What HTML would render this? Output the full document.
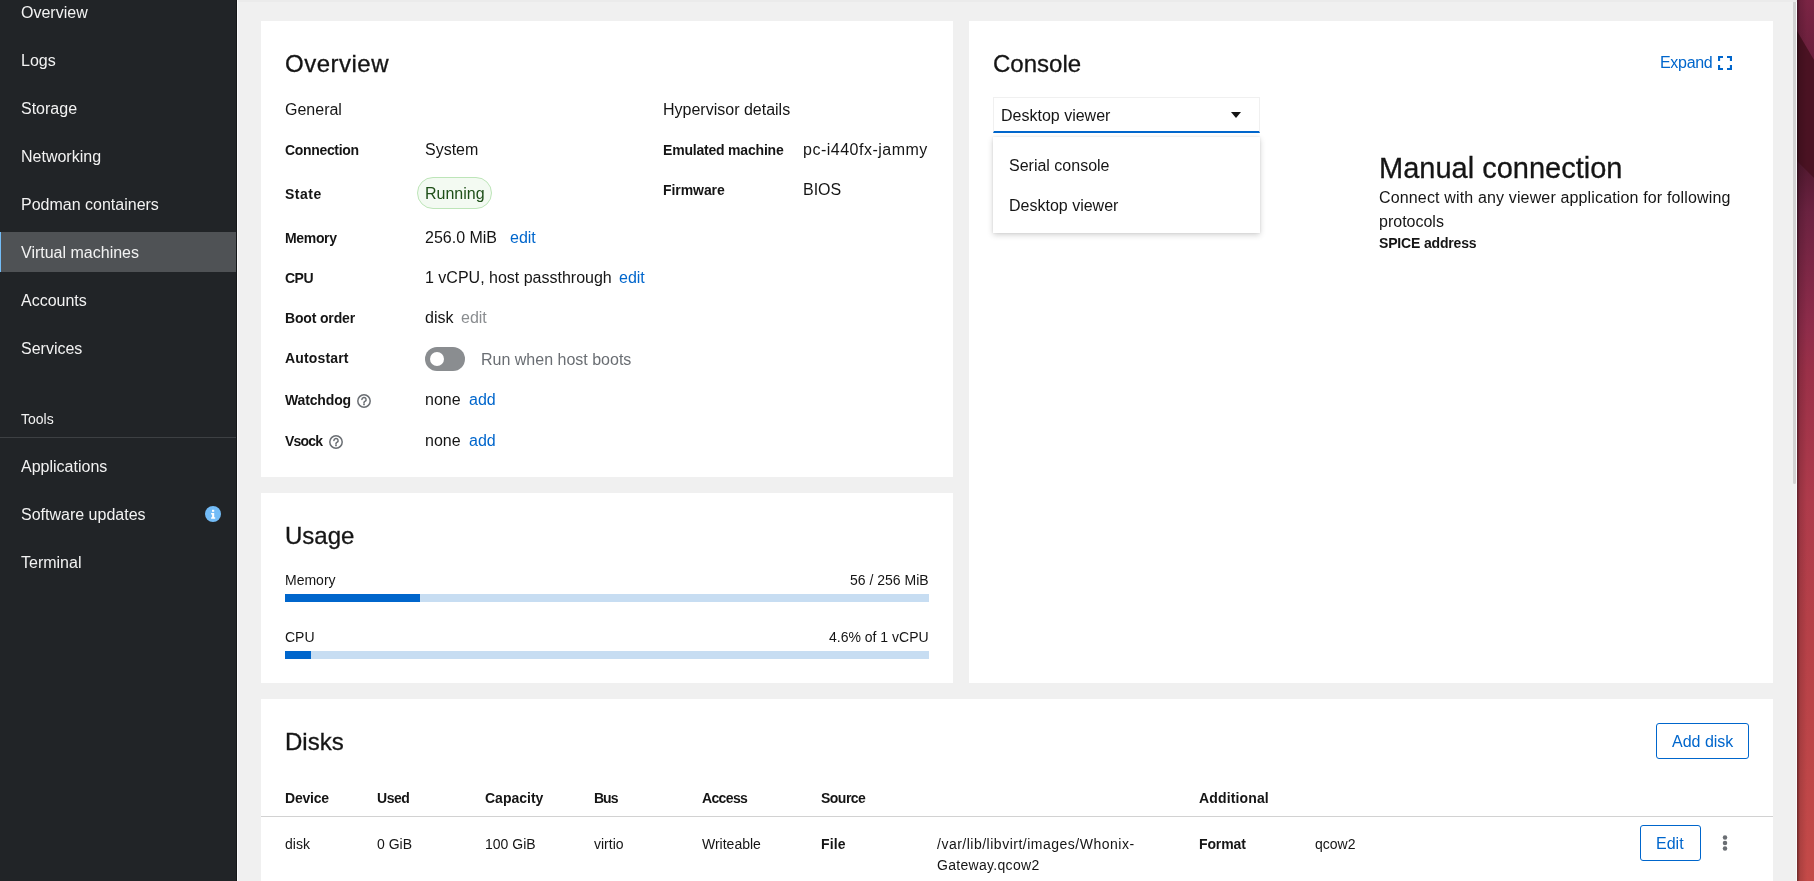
<!DOCTYPE html>
<html><head><meta charset="utf-8"><style>
*{box-sizing:border-box;margin:0;padding:0}
html,body{width:1814px;height:881px;overflow:hidden;background:#f0f0f0;font-family:"Liberation Sans",sans-serif;color:#151515}
.a{position:absolute;white-space:nowrap;will-change:transform}
.b{position:absolute}
</style></head><body>
<svg class="b" style="left:1797px;top:0" width="17" height="881" viewBox="0 0 17 881"><defs><linearGradient id="dg" gradientUnits="userSpaceOnUse" x1="0" y1="0" x2="0" y2="881"><stop offset="0" stop-color="#7a2444"/><stop offset="0.18" stop-color="#50182e"/><stop offset="0.24" stop-color="#6a2240"/><stop offset="0.37" stop-color="#8e2c4a"/><stop offset="0.42" stop-color="#9a3048"/><stop offset="0.57" stop-color="#ae3b4b"/><stop offset="0.7" stop-color="#b54048"/><stop offset="1" stop-color="#c44a48"/></linearGradient><linearGradient id="sh" x1="0" y1="0" x2="1" y2="0"><stop offset="0" stop-color="#000" stop-opacity="0.45"/><stop offset="0.3" stop-color="#000" stop-opacity="0.12"/><stop offset="1" stop-color="#000" stop-opacity="0"/></linearGradient></defs><rect width="17" height="881" fill="url(#dg)"/><polygon points="0,31 17,60 17,178 0,161" fill="#4a1222"/><rect width="10" height="881" fill="url(#sh)"/></svg>
<div class="b" style="left:1796px;top:0;width:1px;height:881px;background:#fafafa"></div>
<div class="b" style="left:1793px;top:0;width:3px;height:484px;background:#d2d2d2;border-radius:0 0 2px 2px"></div>
<div class="b" style="left:237px;top:0;width:1560px;height:2px;background:#ebebeb"></div>
<div class="b" style="left:0;top:0;width:237px;height:881px;background:#212427"></div>
<div class="b" style="left:236px;top:0;width:1px;height:881px;background:#151719"></div>
<div class="b" style="left:237px;top:0;width:1px;height:881px;background:#fbfbfb"></div>
<div class="b" style="left:0;top:232px;width:236px;height:40px;background:#4f5255"></div>
<div class="b" style="left:0;top:232px;width:1px;height:40px;background:#73bcf7"></div>
<div class="a" style="top:2px;font-size:16px;line-height:21px;color:#f2f2f2;left:21px;">Overview</div>
<div class="a" style="top:50px;font-size:16px;line-height:21px;color:#f2f2f2;left:21px;">Logs</div>
<div class="a" style="top:98px;font-size:16px;line-height:21px;color:#f2f2f2;left:21px;">Storage</div>
<div class="a" style="top:146px;font-size:16px;line-height:21px;color:#f2f2f2;left:21px;">Networking</div>
<div class="a" style="top:194px;font-size:16px;line-height:21px;color:#f2f2f2;left:21px;">Podman containers</div>
<div class="a" style="top:242px;font-size:16px;line-height:21px;color:#f2f2f2;left:21px;">Virtual machines</div>
<div class="a" style="top:290px;font-size:16px;line-height:21px;color:#f2f2f2;left:21px;">Accounts</div>
<div class="a" style="top:338px;font-size:16px;line-height:21px;color:#f2f2f2;left:21px;">Services</div>
<div class="a" style="top:410px;font-size:14px;line-height:18px;color:#f2f2f2;left:21px;">Tools</div>
<div class="b" style="left:0;top:437px;width:236px;height:1px;background:#3d4043"></div>
<div class="a" style="top:456px;font-size:16px;line-height:21px;color:#f2f2f2;left:21px;">Applications</div>
<div class="a" style="top:504px;font-size:16px;line-height:21px;color:#f2f2f2;left:21px;">Software updates</div>
<div class="a" style="top:552px;font-size:16px;line-height:21px;color:#f2f2f2;left:21px;">Terminal</div>
<svg class="b" style="left:205px;top:506px" width="16" height="16" viewBox="0 0 16 16"><circle cx="8" cy="8" r="8" fill="#73bcf7"/><rect x="7" y="3.8" width="2.2" height="2" fill="#fff"/><path d="M6.1 6.9h3.1v4.3h1v1.6H6.1v-1.6h1V8.5h-1z" fill="#fff"/></svg>
<div class="b" style="left:261px;top:21px;width:692px;height:456px;background:#fff"></div>
<div class="b" style="left:261px;top:493px;width:692px;height:190px;background:#fff"></div>
<div class="b" style="left:969px;top:21px;width:804px;height:662px;background:#fff"></div>
<div class="b" style="left:261px;top:699px;width:1512px;height:200px;background:#fff"></div>
<div class="a" style="top:48px;font-size:24px;line-height:31px;color:#151515;left:285px;letter-spacing:0.5px;-webkit-text-stroke:0.3px #151515;">Overview</div>
<div class="a" style="top:99px;font-size:16px;line-height:21px;color:#151515;left:285px;">General</div>
<div class="a" style="top:99px;font-size:16px;line-height:21px;color:#151515;left:663px;">Hypervisor details</div>
<div class="a" style="top:141px;font-size:14px;line-height:18px;color:#151515;font-weight:bold;left:285px;letter-spacing:-0.33px;">Connection</div>
<div class="a" style="top:185px;font-size:14px;line-height:18px;color:#151515;font-weight:bold;left:285px;letter-spacing:0.5px;">State</div>
<div class="a" style="top:229px;font-size:14px;line-height:18px;color:#151515;font-weight:bold;left:285px;letter-spacing:-0.34px;">Memory</div>
<div class="a" style="top:269px;font-size:14px;line-height:18px;color:#151515;font-weight:bold;left:285px;letter-spacing:-0.5px;">CPU</div>
<div class="a" style="top:309px;font-size:14px;line-height:18px;color:#151515;font-weight:bold;left:285px;letter-spacing:-0.16px;">Boot order</div>
<div class="a" style="top:349px;font-size:14px;line-height:18px;color:#151515;font-weight:bold;left:285px;letter-spacing:0.16px;">Autostart</div>
<div class="a" style="top:391px;font-size:14px;line-height:18px;color:#151515;font-weight:bold;left:285px;letter-spacing:-0.14px;">Watchdog</div>
<div class="a" style="top:432px;font-size:14px;line-height:18px;color:#151515;font-weight:bold;left:285px;letter-spacing:-0.82px;">Vsock</div>
<div class="a" style="top:139px;font-size:16px;line-height:21px;color:#151515;left:425px;">System</div>
<div class="b" style="left:417px;top:177px;width:75px;height:32px;border-radius:16px;background:#f3faf2;border:1px solid #bde5b8"></div>
<div class="a" style="top:183px;font-size:16px;line-height:21px;color:#1e4f18;left:425px;">Running</div>
<div class="a" style="top:227px;font-size:16px;line-height:21px;color:#151515;left:425px;">256.0 MiB</div>
<div class="a" style="top:227px;font-size:16px;line-height:21px;color:#0066cc;left:510px;">edit</div>
<div class="a" style="top:267px;font-size:16px;line-height:21px;color:#151515;left:425px;">1 vCPU, host passthrough</div>
<div class="a" style="top:267px;font-size:16px;line-height:21px;color:#0066cc;left:619px;">edit</div>
<div class="a" style="top:307px;font-size:16px;line-height:21px;color:#151515;left:425px;">disk</div>
<div class="a" style="top:307px;font-size:16px;line-height:21px;color:#8a8d90;left:461px;">edit</div>
<div class="b" style="left:425px;top:347px;width:40px;height:24px;border-radius:12px;background:#8a8d90"></div>
<div class="b" style="left:430px;top:352px;width:14px;height:14px;border-radius:50%;background:#fff"></div>
<div class="a" style="top:349px;font-size:16px;line-height:21px;color:#6a6e73;left:481px;">Run when host boots</div>
<div class="a" style="top:389px;font-size:16px;line-height:21px;color:#151515;left:425px;">none</div>
<div class="a" style="top:389px;font-size:16px;line-height:21px;color:#0066cc;left:469px;">add</div>
<div class="a" style="top:430px;font-size:16px;line-height:21px;color:#151515;left:425px;">none</div>
<div class="a" style="top:430px;font-size:16px;line-height:21px;color:#0066cc;left:469px;">add</div>
<svg class="b" style="left:357px;top:394px" width="14" height="14" viewBox="0 0 14 14"><circle cx="7" cy="7" r="6.2" fill="none" stroke="#6a6e73" stroke-width="1.5"/><path d="M4.9 5.5a2.1 2.1 0 1 1 3 1.9c-.6.3-.9.6-.9 1.2v.3" fill="none" stroke="#6a6e73" stroke-width="1.5" stroke-linecap="round"/><circle cx="7" cy="10.4" r=".9" fill="#6a6e73"/></svg>
<svg class="b" style="left:329px;top:435px" width="14" height="14" viewBox="0 0 14 14"><circle cx="7" cy="7" r="6.2" fill="none" stroke="#6a6e73" stroke-width="1.5"/><path d="M4.9 5.5a2.1 2.1 0 1 1 3 1.9c-.6.3-.9.6-.9 1.2v.3" fill="none" stroke="#6a6e73" stroke-width="1.5" stroke-linecap="round"/><circle cx="7" cy="10.4" r=".9" fill="#6a6e73"/></svg>
<div class="a" style="top:141px;font-size:14px;line-height:18px;color:#151515;font-weight:bold;left:663px;letter-spacing:-0.2px;">Emulated machine</div>
<div class="a" style="top:139px;font-size:16px;line-height:21px;color:#151515;left:803px;letter-spacing:0.5px;">pc-i440fx-jammy</div>
<div class="a" style="top:181px;font-size:14px;line-height:18px;color:#151515;font-weight:bold;left:663px;letter-spacing:-0.07px;">Firmware</div>
<div class="a" style="top:179px;font-size:16px;line-height:21px;color:#151515;left:803px;">BIOS</div>
<div class="a" style="top:520px;font-size:24px;line-height:31px;color:#151515;left:285px;-webkit-text-stroke:0.3px #151515;">Usage</div>
<div class="a" style="top:571px;font-size:14px;line-height:18px;color:#151515;left:285px;">Memory</div>
<div class="a" style="top:571px;font-size:14px;line-height:18px;color:#151515;right:885px;">56 / 256 MiB</div>
<div class="b" style="left:285px;top:594px;width:644px;height:8px;background:#c7ddf2"></div>
<div class="b" style="left:285px;top:594px;width:135px;height:8px;background:#0066cc"></div>
<div class="a" style="top:628px;font-size:14px;line-height:18px;color:#151515;left:285px;">CPU</div>
<div class="a" style="top:628px;font-size:14px;line-height:18px;color:#151515;right:885px;">4.6% of 1 vCPU</div>
<div class="b" style="left:285px;top:651px;width:644px;height:8px;background:#c7ddf2"></div>
<div class="b" style="left:285px;top:651px;width:26px;height:8px;background:#0066cc"></div>
<div class="a" style="top:48px;font-size:24px;line-height:31px;color:#151515;left:993px;-webkit-text-stroke:0.3px #151515;">Console</div>
<div class="a" style="top:52px;font-size:16px;line-height:21px;color:#0066cc;left:1660px;letter-spacing:-0.3px;">Expand</div>
<svg class="b" style="left:1718px;top:56px" width="14" height="14" viewBox="0 0 14 14"><path d="M1 5V1h4M9 1h4v4M13 9v4H9M5 13H1V9" fill="none" stroke="#0066cc" stroke-width="2.2"/></svg>
<div class="b" style="left:993px;top:97px;width:267px;height:36px;border:1px solid #f0f0f0;border-bottom:2px solid #0066cc;background:#fff"></div>
<div class="a" style="top:105px;font-size:16px;line-height:21px;color:#151515;left:1001px;">Desktop viewer</div>
<svg class="b" style="left:1231px;top:112px" width="10" height="7" viewBox="0 0 10 7"><path d="M0 0h10L5 6z" fill="#151515"/></svg>
<div class="b" style="left:993px;top:137px;width:267px;height:96px;background:#fff;box-shadow:0 2px 6px rgba(3,3,3,0.18),0 0 2px rgba(3,3,3,0.08)"></div>
<div class="a" style="top:155px;font-size:16px;line-height:21px;color:#151515;left:1009px;">Serial console</div>
<div class="a" style="top:195px;font-size:16px;line-height:21px;color:#151515;left:1009px;">Desktop viewer</div>
<div class="a" style="top:149px;font-size:29px;line-height:38px;color:#151515;left:1379px;-webkit-text-stroke:0.3px #151515;">Manual connection</div>
<div class="a" style="top:187px;font-size:16px;line-height:21px;color:#151515;left:1379px;letter-spacing:0.15px;">Connect with any viewer application for following</div>
<div class="a" style="top:211px;font-size:16px;line-height:21px;color:#151515;left:1379px;">protocols</div>
<div class="a" style="top:234px;font-size:14px;line-height:18px;color:#151515;font-weight:bold;left:1379px;letter-spacing:-0.17px;">SPICE address</div>
<div class="a" style="top:726px;font-size:24px;line-height:31px;color:#151515;left:285px;-webkit-text-stroke:0.3px #151515;">Disks</div>
<div class="b" style="left:1656px;top:723px;width:93px;height:36px;border:1px solid #0066cc;border-radius:3px"></div>
<div class="a" style="top:731px;font-size:16px;line-height:21px;color:#0066cc;left:1672px;">Add disk</div>
<div class="a" style="top:789px;font-size:14px;line-height:18px;color:#151515;font-weight:bold;left:285px;letter-spacing:-0.2px;">Device</div>
<div class="a" style="top:789px;font-size:14px;line-height:18px;color:#151515;font-weight:bold;left:377px;letter-spacing:-0.47px;">Used</div>
<div class="a" style="top:789px;font-size:14px;line-height:18px;color:#151515;font-weight:bold;left:485px;letter-spacing:0.0px;">Capacity</div>
<div class="a" style="top:789px;font-size:14px;line-height:18px;color:#151515;font-weight:bold;left:594px;letter-spacing:-1.0px;">Bus</div>
<div class="a" style="top:789px;font-size:14px;line-height:18px;color:#151515;font-weight:bold;left:702px;letter-spacing:-0.64px;">Access</div>
<div class="a" style="top:789px;font-size:14px;line-height:18px;color:#151515;font-weight:bold;left:821px;letter-spacing:-0.52px;">Source</div>
<div class="a" style="top:789px;font-size:14px;line-height:18px;color:#151515;font-weight:bold;left:1199px;letter-spacing:0.14px;">Additional</div>
<div class="b" style="left:261px;top:816px;width:1512px;height:1px;background:#d2d2d2"></div>
<div class="a" style="top:835px;font-size:14px;line-height:18px;color:#151515;left:285px;">disk</div>
<div class="a" style="top:835px;font-size:14px;line-height:18px;color:#151515;left:377px;">0 GiB</div>
<div class="a" style="top:835px;font-size:14px;line-height:18px;color:#151515;left:485px;">100 GiB</div>
<div class="a" style="top:835px;font-size:14px;line-height:18px;color:#151515;left:594px;">virtio</div>
<div class="a" style="top:835px;font-size:14px;line-height:18px;color:#151515;left:702px;">Writeable</div>
<div class="a" style="top:835px;font-size:14px;line-height:18px;color:#151515;font-weight:bold;left:821px;letter-spacing:0.1px;">File</div>
<div class="a" style="top:835px;font-size:14px;line-height:18px;color:#151515;left:937px;"><span style="letter-spacing:0.5px">/var/lib/libvirt/images/Whonix-</span></div>
<div class="a" style="top:835px;font-size:14px;line-height:18px;color:#151515;font-weight:bold;left:1199px;letter-spacing:-0.12px;">Format</div>
<div class="a" style="top:835px;font-size:14px;line-height:18px;color:#151515;left:1315px;">qcow2</div>
<div class="a" style="top:856px;font-size:14px;line-height:18px;color:#151515;left:937px;letter-spacing:0.3px;">Gateway.qcow2</div>
<div class="b" style="left:1640px;top:825px;width:61px;height:36px;border:1px solid #0066cc;border-radius:3px"></div>
<div class="a" style="top:833px;font-size:16px;line-height:21px;color:#0066cc;left:1656px;">Edit</div>
<svg class="b" style="left:1720px;top:832px" width="10" height="22" viewBox="0 0 10 22"><circle cx="5" cy="5.4" r="2.25" fill="#6a6e73"/><circle cx="5" cy="11" r="2.25" fill="#6a6e73"/><circle cx="5" cy="16.6" r="2.25" fill="#6a6e73"/></svg>
</body></html>
